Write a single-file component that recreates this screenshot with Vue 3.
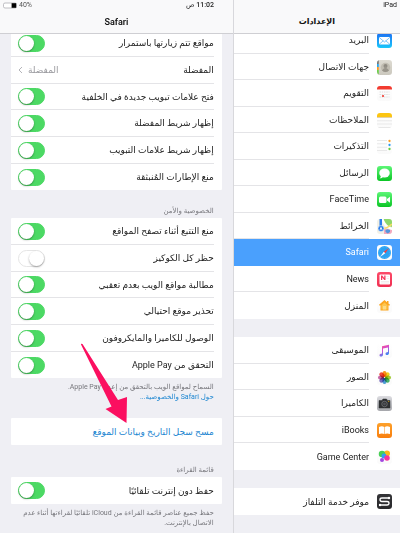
<template>
  <div class="settings" dir="rtl">
    <div class="status-bar">
      <span class="device">iPad</span>
      <span class="clock">11:02 ص</span>
      <span class="battery">
        <span>40%</span>
        <svg width="14" height="7" viewBox="0 0 14 7">
          <rect x="0.500" y="1" width="13" height="5" rx="1.500" fill="#fff" stroke="#a5a5aa" stroke-width="0.700" />
          <rect x="8.600" y="1.200" width="4.600" height="4.600" fill="#000" />
        </svg>
      </span>
    </div>

    <aside class="sidebar">
      <header class="bar"><h2>الإعدادات</h2></header>
      <nav class="menu">
        <ul v-for="(group, i) in menu" :key="i">
          <li v-for="item in group" :key="item.id">
            <a href="#" :class="{ active: item.id === current }" @click.prevent="current = item.id">
              <svg class="icon" viewBox="0 0 30 30" aria-hidden="true">
                <defs>
                  <linearGradient :id="'g-' + item.id" x1="0" y1="0" x2="0" y2="1">
                    <stop offset="0" :stop-color="item.bg[0]" />
                    <stop offset="1" :stop-color="item.bg[1]" />
                  </linearGradient>
                </defs>
                <rect width="30" height="30" rx="6" :fill="`url(#g-${item.id})`" />
                <g v-if="item.id === 'mail'">
                  <rect x="4" y="8" width="22" height="15" rx="2" fill="#fff" />
                  <path d="M4.500 9l10.500 9 10.500-9M4.500 22.500l8-7M25.500 22.500l-8-7" fill="none" stroke="#3aa5f5" stroke-width="1.300" />
                </g>
                <g v-else-if="item.id === 'contacts'">
                  <path d="M0 8V6q0-4 3.500-5.500V8z" fill="#777" />
                  <path d="M0 8h3.500v6H0z" fill="#29a7f0" />
                  <path d="M0 14h3.500v6H0z" fill="#ff9a1f" />
                  <path d="M0 20h3.500v9Q0 27 0 23z" fill="#6cd04a" />
                  <circle cx="17" cy="15" r="9.500" fill="#c0bcb1" />
                  <circle cx="17" cy="12" r="4" fill="#8f8b82" />
                  <path d="M10 21q2-4 5-4.500V13h4v3.500q3 .5 5 4.500-7 6-14 0z" fill="#99958b" />
                </g>
                <g v-else-if="item.id === 'calendar'">
                  <path d="M0 7V6q0-6 6-6h18q6 0 6 6v1z" fill="#f23b30" />
                  <path d="M5 12h20M5 17h20M5 22h20" stroke="#cfcfcf" stroke-width="1.300" stroke-dasharray="3 1.500" />
                  <circle cx="12" cy="20" r="2.200" fill="#f23b30" />
                </g>
                <g v-else-if="item.id === 'notes'">
                  <path d="M0 8V6q0-6 6-6h18q6 0 6 6v2z" fill="#fcc512" />
                  <path d="M0 9h30" stroke="#c9a24a" />
                  <path d="M0 15.500h30M0 22h30M3 29h24" stroke="#d5d5d5" />
                </g>
                <g v-else-if="item.id === 'reminders'">
                  <path d="M0 3h20M0 9.500h20M0 16.500h20M0 23h20" stroke="#d5d5d5" />
                  <circle cx="25" cy="4" r="2.300" fill="#ff9d22" />
                  <circle cx="25" cy="12" r="2.300" fill="#2b9bf2" />
                  <circle cx="25" cy="20" r="2.300" fill="#63cf42" />
                </g>
                <g v-else-if="item.id === 'messages'">
                  <ellipse cx="15" cy="14" rx="10.500" ry="9" fill="#fff" />
                  <path d="M8 19q0 4-3 6 5 0 8-4z" fill="#fff" />
                </g>
                <g v-else-if="item.id === 'facetime'">
                  <rect x="4" y="9" width="15" height="13" rx="3" fill="#fff" />
                  <path d="M20 14l6-4.500v12L20 17z" fill="#fff" />
                </g>
                <g v-else-if="item.id === 'maps'">
                  <path d="M13 0h11q6 0 6 6v10q-12-2-17-16z" fill="#8fd86a" />
                  <path d="M14 19q7-1 16 3v2q0 6-6 6H14z" fill="#f3a9bf" />
                  <path d="M11 0q3 15 19 20" fill="none" stroke="#fff" stroke-width="4" />
                  <path d="M10 18q8 3 20-8" fill="none" stroke="#fbdc6a" stroke-width="3" />
                  <path d="M5 0h5v20H5z" fill="#2b7de9" />
                  <circle cx="8" cy="19" r="6" fill="#2b7de9" stroke="#fff" />
                  <path d="M8 15l3 7-3-1.500L5 22z" fill="#fff" />
                  <path d="M17 22l4-1.500 5 1.500v4l-4.500 3-4.500-3z" fill="#5596dc" />
                </g>
                <g v-else-if="item.id === 'safari'">
                  <circle cx="15" cy="15" r="13" fill="#2aa2f2" />
                  <circle cx="15" cy="15" r="11" fill="none" stroke="#8fd3fa" stroke-width="1" stroke-dasharray="1 2" />
                  <path d="M24 6l-7.500 10.500-3-3z" fill="#fb3b38" />
                  <path d="M6 24l7.500-10.500 3 3z" fill="#fff" />
                </g>
                <g v-else-if="item.id === 'news'">
                  <rect x="5" y="5" width="21" height="20" rx="1.500" fill="#fff" />
                  <path d="M8 16V7h2.500l4 5V7H17v9h-2.500l-4-5v5z" fill="#f6395c" />
                  <path d="M19 9h5M19 13h5M8 19h16M8 22h16" stroke="#e9dfe1" stroke-width="1.200" />
                </g>
                <g v-else-if="item.id === 'home'">
                  <path d="M15 4L4 13.500l1.500 2L7 14.500V25h16V14.500l1.500 1 1.500-2-3-2.700V6h-3v2.500z" fill="#fca61f" />
                  <path d="M15 9l-6 5.500V23h12v-8.500z" fill="#fdc54e" />
                  <path d="M12 16h6v7h-6z" fill="#fddb86" />
                </g>
                <g v-else-if="item.id === 'music'">
                  <linearGradient id="note" x1="0" y1="0" x2="0.500" y2="1">
                    <stop offset="0" stop-color="#ff5a70" />
                    <stop offset="0.500" stop-color="#d64bd0" />
                    <stop offset="1" stop-color="#3a8bf5" />
                  </linearGradient>
                  <path
                    d="M10 6.500l14-3V20c0 3-2 4-4 4s-3-1-3-2.500c0-2.500 2-3 5-3.500V9l-10 2v12c0 3-2 4-4 4s-3-1-3-2.500C5 22 7 21.500 10 21z"
                    fill="url(#note)"
                  />
                </g>
                <g v-else-if="item.id === 'photos'">
                  <ellipse
                    v-for="(c, n) in petals"
                    :key="c"
                    class="petal"
                    cx="15"
                    cy="8"
                    rx="4.200"
                    ry="6"
                    :fill="c"
                    :transform="`rotate(${n * 45} 15 15)`"
                  />
                </g>
                <g v-else-if="item.id === 'camera'">
                  <path d="M4 9h6l2-3h7l2 3h5v15H4z" fill="#2f3033" stroke="#2f3033" stroke-linejoin="round" />
                  <circle cx="15" cy="16" r="5.500" fill="#2f3033" stroke="#8c8d91" stroke-width="1.200" />
                  <circle cx="15" cy="16" r="2.800" fill="#505257" />
                  <circle cx="23.500" cy="11" r="1" fill="#ffc400" />
                </g>
                <g v-else-if="item.id === 'ibooks'">
                  <path d="M4 8q6-3 10.500 0v14Q10 19.500 4 22zM26 8q-6-3-10.500 0v14Q20 19.500 26 22z" fill="#fff" />
                </g>
                <g v-else-if="item.id === 'games'">
                  <circle cx="20" cy="9" r="6" fill="#fbb81b" />
                  <circle cx="10" cy="10" r="6.500" fill="#48cf55" />
                  <circle cx="14" cy="14" r="5" fill="#2f9df4" />
                  <circle cx="20" cy="18" r="5.500" fill="#f5359b" />
                  <circle cx="10" cy="22" r="4" fill="#a246e0" />
                </g>
                <g v-else-if="item.id === 'tv'">
                  <path d="M26 8H10q-4 0-4 3.500T10 15h10q4 0 4 3.500T20 22H4" fill="none" stroke="#fff" stroke-width="2.600" />
                  <circle cx="24" cy="8" r="2.400" fill="#fff" />
                  <circle cx="6" cy="22" r="2.400" fill="#fff" />
                </g>
              </svg>
              <span>{{ item.label }}</span>
            </a>
          </li>
        </ul>
      </nav>
    </aside>

    <main class="detail">
      <header class="bar"><h1>Safari</h1></header>
      <div class="content">
        <section class="card">
          <template v-for="row in general" :key="row.label">
            <label v-if="'on' in row" class="row">
              <span>{{ row.label }}</span>
              <input v-model="row.on" type="checkbox" class="switch" role="switch" />
            </label>
            <a v-else href="#" class="row">
              <span>{{ row.label }}</span>
              <span class="value">
                {{ row.value }}
                <svg width="5" height="8" viewBox="0 0 5 8"><path d="M4 1L1 4l3 3" fill="none" stroke="#b4b4b9" /></svg>
              </span>
            </a>
          </template>
        </section>

        <h3>الخصوصية والأمن</h3>
        <section class="card">
          <label v-for="row in privacy" :key="row.label" class="row">
            <span>{{ row.label }}</span>
            <input v-model="row.on" type="checkbox" class="switch" role="switch" />
          </label>
        </section>
        <p class="note">
          السماح لمواقع الويب بالتحقق من إعداد Apple Pay.<br />
          <a href="#">حول Safari والخصوصية...</a>
        </p>

        <section class="card clear">
          <button type="button" class="row action">مسح سجل التاريخ وبيانات الموقع</button>
          <svg class="arrow" width="48" height="82" viewBox="0 0 48 82" aria-hidden="true">
            <path d="M-0.500 0.500L1.500 1L37 57L46 54L45.500 80L24.500 66L30.500 63.500Z" fill="#fb0f60" />
          </svg>
        </section>

        <h3>قائمة القراءة</h3>
        <section class="card">
          <label class="row">
            <span>حفظ دون إنترنت تلقائيًا</span>
            <input v-model="offline" type="checkbox" class="switch" role="switch" />
          </label>
        </section>
        <p class="note">
          حفظ جميع عناصر قائمة القراءة من iCloud تلقائيًا لقراءتها أثناء عدم الاتصال بالإنترنت.
        </p>
      </div>
    </main>
  </div>
</template>

<script setup>
import { ref } from 'vue';

const current = ref('safari');
const offline = ref(true);

const white = ['#ffffff', '#fafafa'];
const petals = ['#f7941d', '#f4d31f', '#a5cf3a', '#4cb66b', '#4c9fd8', '#7a6fc0', '#c767a8', '#ee4b3c'];

const menu = [
  [
    { id: 'mail', label: 'البريد', bg: ['#1d6ff2', '#1ac8fb'] },
    { id: 'contacts', label: 'جهات الاتصال', bg: ['#dedbd2', '#cbc8be'] },
    { id: 'calendar', label: 'التقويم', bg: white },
    { id: 'notes', label: 'الملاحظات', bg: white },
    { id: 'reminders', label: 'التذكيرات', bg: white },
    { id: 'messages', label: 'الرسائل', bg: ['#5df777', '#0bc525'] },
    { id: 'facetime', label: 'FaceTime', bg: ['#5df777', '#0bc525'] },
    { id: 'maps', label: 'الخرائط', bg: ['#f2f0e6', '#f2f0e6'] },
    { id: 'safari', label: 'Safari', bg: white },
    { id: 'news', label: 'News', bg: ['#fc4a68', '#f02f52'] },
    { id: 'home', label: 'المنزل', bg: white }
  ],
  [
    { id: 'music', label: 'الموسيقى', bg: white },
    { id: 'photos', label: 'الصور', bg: white },
    { id: 'camera', label: 'الكاميرا', bg: ['#dcdce0', '#a5a6ab'] },
    { id: 'ibooks', label: 'iBooks', bg: ['#fda12b', '#f97e0d'] },
    { id: 'games', label: 'Game Center', bg: white }
  ],
  [{ id: 'tv', label: 'موفر خدمة التلفاز', bg: ['#343437', '#29292b'] }]
];

const general = ref([
  { label: 'مواقع تتم زيارتها باستمرار', on: true },
  { label: 'المفضلة', value: 'المفضلة' },
  { label: 'فتح علامات تبويب جديدة في الخلفية', on: true },
  { label: 'إظهار شريط المفضلة', on: true },
  { label: 'إظهار شريط علامات التبويب', on: true },
  { label: 'منع الإطارات المُنبثقة', on: true }
]);

const privacy = ref([
  { label: 'منع التتبع أثناء تصفح المواقع', on: true },
  { label: 'حظر كل الكوكيز', on: false },
  { label: 'مطالبة مواقع الويب بعدم تعقبي', on: true },
  { label: 'تحذير موقع احتيالي', on: true },
  { label: 'الوصول للكاميرا والمايكروفون', on: true },
  { label: 'التحقق من Apple Pay', on: true }
]);
</script>

<style>
body {
  margin: 0;
  background: #efeff4;
}
</style>

<style scoped>
.settings {
  position: relative;
  display: flex;
  min-height: 100vh;
  background: #efeff4;
  color: #222;
  font-family: Roboto, 'DejaVu Sans', sans-serif;
  font-size: 9px;
  line-height: 12px;
}

h1, h2, h3, p, ul {
  margin: 0;
  padding: 0;
  font-weight: normal;
}

a {
  color: inherit;
  text-decoration: none;
}

/* Status bar, over both columns */
.status-bar {
  position: absolute;
  z-index: 2;
  top: 0;
  left: 0;
  right: 0;
  display: grid;
  grid-template-columns: 1fr auto 1fr;
  padding: 0 3px;
  font-size: 7px;
  line-height: 11px;
}

.clock {
  font-weight: 500;
}

.battery {
  display: flex;
  justify-content: flex-end;
  align-items: center;
  gap: 2px;
  color: #555;
}

/* Columns */
.sidebar {
  flex: 5;
  min-width: 0;
  border-left: 1px solid #d8d8dc;
}

.detail {
  flex: 7;
  min-width: 0;
}

.bar {
  position: relative;
  z-index: 1;
  box-sizing: border-box;
  height: 34px;
  padding-top: 15px;
  border-bottom: 1px solid #cfcfd3;
  background: #f9f9fa;
  text-align: center;
}

.bar h1, .bar h2 {
  font-size: 9px;
  line-height: 14px;
  font-weight: 600;
  color: #111;
}

.bar h2 {
  font-size: 8px;
}

/* Sidebar menu */
.menu {
  display: flex;
  flex-direction: column;
  gap: 18px;
  margin-top: -7px;
}

.menu ul {
  list-style: none;
  background: #fff;
}

.menu a {
  display: flex;
  align-items: center;
  gap: 8px;
  height: 26px;
  padding-right: 8px;
}

.menu li:nth-child(odd) a {
  height: 27px;
}

.menu span {
  flex: 1;
  align-self: stretch;
  display: flex;
  align-items: center;
}

.menu li:not(:last-child) span {
  border-bottom: 1px solid #e4e4e7;
}

.menu .active {
  background: #4aa0fd;
  color: #fff;
}

.menu li:not(:last-child) .active span {
  border-color: transparent;
}

.icon {
  flex: none;
  width: 15px;
  height: 15px;
}

.petal {
  mix-blend-mode: multiply;
}

/* Detail pane */
.content {
  padding: 0 11px;
  margin-top: -4px;
}

.card {
  background: #fff;
  border-radius: 1px;
}

.row {
  display: flex;
  align-items: center;
  justify-content: space-between;
  box-sizing: border-box;
  height: 27px;
  margin-right: 8px;
  padding-left: 7px;
}

.row:nth-child(3n) {
  height: 26px;
}

.row:not(:last-child) {
  border-bottom: 1px solid #e4e4e7;
}

.value {
  display: flex;
  align-items: center;
  gap: 5px;
  color: #98989d;
}

.switch {
  appearance: none;
  position: relative;
  width: 27px;
  height: 17px;
  margin: 0;
  border: 1px solid #e5e5e5;
  border-radius: 9px;
  background: #fff;
}

.switch::before {
  content: '';
  position: absolute;
  top: 0;
  right: 0;
  width: 15px;
  height: 15px;
  border-radius: 50%;
  background: #fff;
  box-shadow: 0 1px 2px rgba(0, 0, 0, 0.35);
}

.switch:checked {
  border-color: #4cd964;
  background: #4cd964;
}

.switch:checked::before {
  right: auto;
  left: 0;
}

h3 {
  padding: 16px 8px 1px;
  font-size: 7px;
  line-height: 11px;
  color: #77777c;
}

.note {
  padding: 4px 8px 0;
  font-size: 7px;
  line-height: 10px;
  color: #77777c;
}

.note a {
  color: #1c86d1;
}

.clear {
  position: relative;
  margin: 16px 0 20px;
}

.clear + h3 {
  padding-top: 0;
}

.clear .row {
  border: 0;
}

.action {
  width: calc(100% - 8px);
  padding: 0;
  background: none;
  color: #1c86d1;
  font: inherit;
}

.arrow {
  position: absolute;
  bottom: 20px;
  left: 70px;
  pointer-events: none;
}
</style>
